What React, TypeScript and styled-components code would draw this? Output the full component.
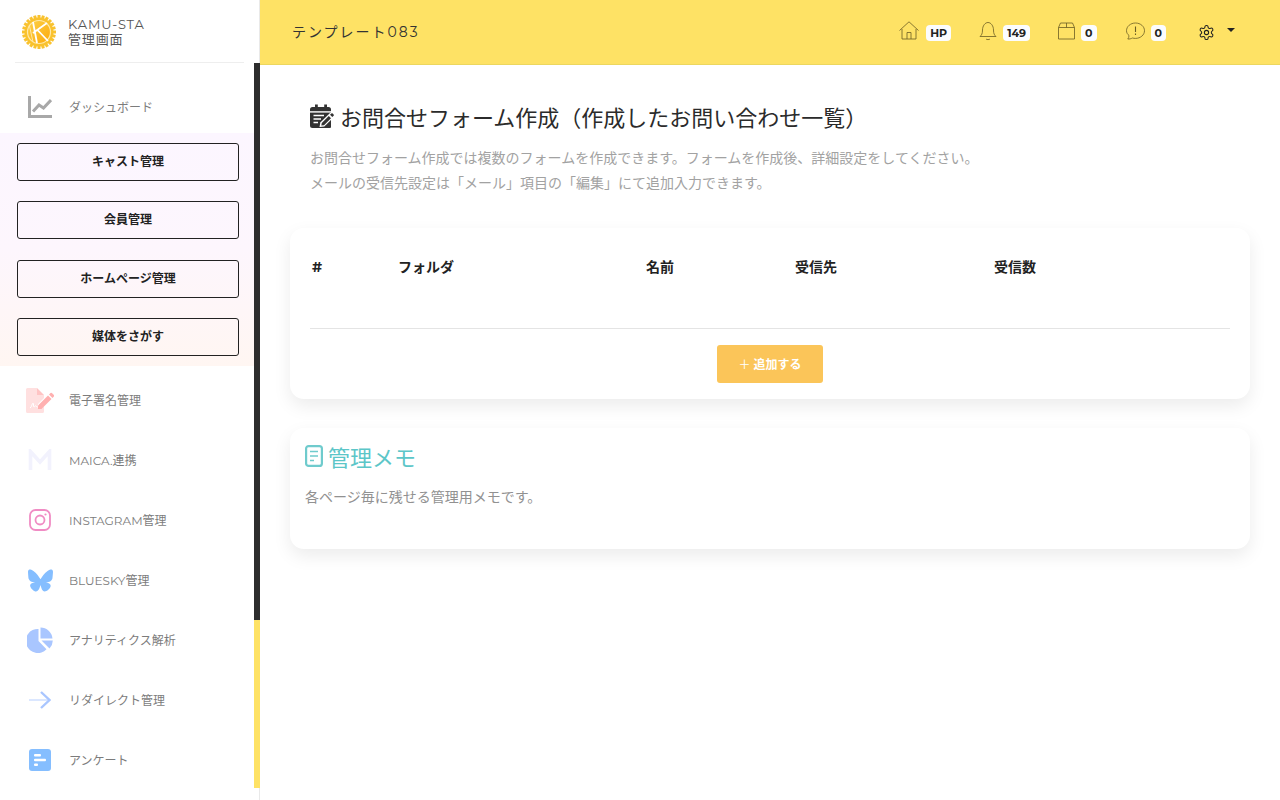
import React from 'react';
import styled, { createGlobalStyle } from 'styled-components';
import { FaBluesky } from 'react-icons/fa6';

const FONT = `Montserrat, Inter, "Noto Sans CJK JP", sans-serif`;

const GlobalStyle = createGlobalStyle`
  html, body {
    margin: 0;
    height: 100%;
    overflow: hidden;
    background: #fff;
  }
  * { box-sizing: border-box; }
  body { font-family: ${FONT}; color: #222; }
`;

const Page = styled.div`
  display: flex;
  width: 1280px;
  height: 800px;
  overflow: hidden;
`;

const Sidebar = styled.aside`
  position: relative;
  flex: 0 0 260px;
  height: 800px;
  border-right: 1px solid #e9e9e9;
`;

const Brand = styled.div`
  display: flex;
  align-items: center;
  gap: 12px;
  height: 63px;
  margin: 0 15px;
  width: 229px;
  padding: 1px 0 0 7px;
  border-bottom: 1px solid #eeeeee;
`;

const BrandText = styled.div`
  font-size: 13px;
  line-height: 15px;
  color: #555;
  letter-spacing: 0.85px;
`;

const NavItem = styled.div`
  display: flex;
  align-items: center;
  height: 60px;
  padding-left: 25px;
  font-size: 12px;
  color: #7c7c7c;
`;

const NavLabel = styled.span`
  padding-bottom: 2px;
`;

const NavIconBox = styled.span`
  display: flex;
  align-items: center;
  justify-content: center;
  flex: 0 0 30px;
  height: 30px;
  margin-right: 14px;
`;

const DashboardItem = styled(NavItem)`
  height: 70px;
  padding-top: 18px;
`;

const ManageBand = styled.div`
  display: flex;
  flex-direction: column;
  gap: 20.25px;
  width: 254px;
  height: 233px;
  padding: 10px 15px 0 17px;
  background: linear-gradient(180deg, #fcf6ff 0%, #fdf6fd 50%, #fff6f2 100%);
`;

const ManageButton = styled.div`
  display: flex;
  align-items: center;
  justify-content: center;
  width: 222px;
  height: 38px;
  padding-bottom: 3px;
  border: 1px solid #222;
  border-radius: 3px;
  font-size: 12px;
  font-weight: 700;
  color: #222;
`;

const NavList = styled.div`
  display: flex;
  flex-direction: column;
  padding-top: 4px;
`;

const ScrollTrack = styled.div`
  position: absolute;
  top: 63px;
  right: -1px;
  width: 6px;
  height: 725px;
  background: #2d2d2d;
`;

const ScrollThumb = styled.div`
  position: absolute;
  left: 0;
  bottom: 0;
  width: 100%;
  height: 168px;
  background: #fee265;
`;

const Main = styled.div`
  flex: 1;
  display: flex;
  flex-direction: column;
  min-width: 0;
`;

const TopBar = styled.header`
  display: flex;
  align-items: center;
  justify-content: space-between;
  height: 65px;
  padding: 0 45px 0 32px;
  background: #fee265;
  border-bottom: 1px solid #ecd75f;
`;

const TopTitle = styled.div`
  font-size: 14px;
  letter-spacing: 2px;
  color: #333;
  padding-bottom: 2px;
`;

const TopActions = styled.div`
  display: flex;
  align-items: center;
`;

const TopAction = styled.div<{ $gap: number; $iconGap?: number }>`
  display: flex;
  align-items: center;
  gap: ${props => props.$iconGap || 6}px;
  margin-right: ${props => props.$gap}px;
  color: #6b5d23;

  svg {
    margin-top: -3px;
  }
`;

const CountBadge = styled.span`
  display: inline-flex;
  align-items: center;
  justify-content: center;
  min-width: 15px;
  height: 16px;
  margin-top: 1px;
  padding: 0 4px;
  background: #fbfcff;
  border-radius: 4px;
  font-size: 11px;
  font-weight: 700;
  color: #222;
`;

const Caret = styled.span`
  width: 0;
  height: 0;
  margin: -4px 0 0 12px;
  border-left: 4px solid transparent;
  border-right: 4px solid transparent;
  border-top: 4px solid #222;
`;

const Content = styled.main`
  display: flex;
  flex-direction: column;
  padding: 0 30px;
`;

const Intro = styled.section`
  padding: 36px 20px 0;
  height: 163px;
`;

const PageTitle = styled.h1`
  display: flex;
  align-items: center;
  gap: 4px;
  margin: 0 0 15px;
  height: 30px;
  font-size: 22px;
  font-weight: 400;
  color: #2b2b2b;
`;

const Description = styled.p`
  margin: 0;
  font-size: 14px;
  line-height: 25px;
  color: #a2a2a2;
`;

const Card = styled.section`
  width: 960px;
  background: #fff;
  border-radius: 14px;
  box-shadow: 0 7px 18px rgba(0, 0, 0, 0.08);
`;

const TableCard = styled(Card)`
  height: 171px;
  padding: 0 20px;
  margin-bottom: 29px;
`;

const TableHead = styled.div`
  display: grid;
  grid-template-columns: 86px 248px 149px 199px 1fr;
  height: 101px;
  padding: 27px 2px 0;
  border-bottom: 1px solid #e4e4e4;
  font-size: 14px;
  font-weight: 700;
  line-height: 24px;
  color: #222;
`;

const TableFoot = styled.div`
  display: flex;
  justify-content: center;
  padding-top: 16px;
`;

const AddButton = styled.div`
  display: flex;
  align-items: center;
  justify-content: center;
  gap: 3px;
  width: 106px;
  height: 38px;
  padding-bottom: 2px;
  background: #fbc559;
  border-radius: 3px;
  font-size: 12px;
  font-weight: 700;
  color: #fff;
`;

const AddPlus = styled.span`
  font-weight: 400;
`;

const MemoCard = styled(Card)`
  height: 121px;
  padding: 12px 15px 0;
`;

const MemoTitle = styled.h2`
  display: flex;
  align-items: center;
  gap: 5px;
  margin: 0 0 13px;
  height: 32px;
  font-size: 22px;
  font-weight: 400;
  color: #5cc6c8;
`;

const MemoText = styled.p`
  margin: 0;
  font-size: 14px;
  line-height: 24px;
  color: #919191;
`;

const sunTeeth = Array.from({ length: 24 }, (_, i) => i * 15);

const LogoMark = () => (
  <svg width="34" height="34" viewBox="0 0 34 34">
    <defs>
      <linearGradient id="sun" x1="0" y1="0" x2="1" y2="1">
        <stop offset="0" stopColor="#fcd24a" />
        <stop offset="1" stopColor="#fda90a" />
      </linearGradient>
    </defs>
    {sunTeeth.map(deg => (
      <rect key={deg} x="15.500" y="0" width="3" height="4" fill="#f9c22e" transform={`rotate(${deg} 17 17)`} />
    ))}
    <circle cx="17" cy="17" r="14.500" fill="#f9c22e" />
    <circle cx="17" cy="17" r="11.500" fill="url(#sun)" stroke="#ffe9a8" strokeWidth="1.200" />
    <path d="M11 7 15 28M11 18 25 8M15.500 15 26 26" stroke="#fff" strokeWidth="1.800" fill="none" />
    <path d="M7.500 11 11 27" stroke="#ffe9a8" strokeWidth="1" fill="none" />
  </svg>
);

const ChartIcon = () => (
  <svg width="24" height="22" viewBox="0 0 24 22" fill="none" stroke="#a8a8a8" strokeWidth="3">
    <path d="M1.500 0V20.500H24" />
    <path d="M5 15.500 11 9l4.500 3L23 4" />
  </svg>
);

const CalendarEditIcon = () => (
  <svg width="26" height="24" viewBox="0 0 26 24">
    <path d="M2.500 3H5V0.500h2.800V3h6.400V0.500H17V3h1.500A2.500 2.500 0 0 1 21 5.500V23a1 1 0 0 1-1 1H2.500A2.500 2.500 0 0 1 0 21.500V5.500A2.500 2.500 0 0 1 2.500 3Z" fill="#333" />
    <rect x="0" y="7.200" width="21" height="1.400" fill="#fff" />
    <path d="M3.500 11.500h10.500M3.500 15h7.500M3.500 18.500h4.500" stroke="#fff" strokeWidth="1.600" />
    <path d="M9.500 23l.8-4.500L20.500 8.500l4 4L14.300 22.500Z" fill="#fff" />
    <path d="M11.300 21.500l.5-2.500 7-7 2.200 2.200-7 7ZM20 10.800l1.300-1.300a1 1 0 0 1 1.400 0l.9.900a1 1 0 0 1 0 1.400L22.300 13Z" fill="#333" />
  </svg>
);

const SignIcon = () => (
  <svg width="28" height="25" viewBox="0 0 28 25">
    <path d="M1.500 0H11v7h7v3l-6 6v4h4l2-2v5.500a1.500 1.500 0 0 1-1.500 1.500h-15A1.500 1.500 0 0 1 0 23.500V1.500A1.500 1.500 0 0 1 1.500 0Z" fill="#ffe0e0" />
    <path d="M11 0l7 7h-7Z" fill="#ffc4c4" />
    <path d="M12 17.500 22 7.500l3.500 3.500-10 10H12Z" fill="#ffb0b0" />
    <path d="M23 6.500l1.500-1.500a1 1 0 0 1 1.400 0l2 2a1 1 0 0 1 0 1.400L26.500 10Z" fill="#ffb0b0" />
    <path d="M4 20c2-1 2-5 3-5s0 4 1 4 1-2 2-1 1 1 2 1" stroke="#fff" strokeWidth="1" fill="none" />
  </svg>
);

const MaicaIcon = () => (
  <svg width="24" height="22" viewBox="0 0 24 22">
    <path d="M2.500 21V2.500L12 13 21.500 2.500V21" stroke="#f2f2fd" strokeWidth="3.600" fill="none" />
  </svg>
);

const InstagramIcon = () => (
  <svg width="22" height="22" viewBox="0 0 22 22" fill="none">
    <rect x="1" y="1" width="20" height="20" rx="5.500" stroke="#f08cc4" strokeWidth="1.800" />
    <circle cx="11" cy="11" r="4.500" stroke="#f08cc4" strokeWidth="1.800" />
    <circle cx="16.500" cy="5.500" r="1.100" fill="#f08cc4" />
  </svg>
);

const PieIcon = () => (
  <svg width="26" height="26" viewBox="0 0 26 26">
    <path d="M11.500 2V14l8 8.200A12 12 0 1 1 11.500 2Z" fill="#a9c6ff" />
    <path d="M13.500 0.500A12 12 0 0 1 25.500 11.500H13.500Z" fill="#a9c6ff" />
    <path d="M14.500 13.500H25.800A12 12 0 0 1 22.500 21.500Z" fill="#a9c6ff" />
  </svg>
);

const ArrowIcon = () => (
  <svg width="22" height="18" viewBox="0 0 22 18" fill="none">
    <path d="M0 9H20" stroke="#dbe7ff" strokeWidth="2" />
    <path d="M12 1l8.500 8-8.500 8" stroke="#a9c6ff" strokeWidth="2.400" />
  </svg>
);

const SurveyIcon = () => (
  <svg width="22" height="22" viewBox="0 0 22 22">
    <rect width="22" height="22" rx="3" fill="#85beff" />
    <rect x="5" y="5" width="7" height="2.600" rx="1" fill="#fff" />
    <rect x="5" y="9.700" width="12" height="2.600" rx="1" fill="#fff" />
    <rect x="5" y="14.400" width="4" height="2.600" rx="1" fill="#fff" />
  </svg>
);

const HomeIcon = () => (
  <svg width="20" height="19" viewBox="0 0 20 19" fill="none" stroke="#6b5d23" strokeWidth="0.800">
    <path d="M0.500 9.500 10 0.800l9.500 8.700M3 8v10h14V8M8 18v-6.500h4V18" />
  </svg>
);

const BellIcon = () => (
  <svg width="18" height="20" viewBox="0 0 18 20" fill="none" stroke="#6b5d23" strokeWidth="0.800">
    <path d="M1 15.500c1.500-1.500 2.500-2.500 2.500-6.500 0-4 2.500-7.500 5.500-7.500s5.500 3.500 5.500 7.500c0 4 1 5 2.500 6.500Z" />
    <path d="M7 18c.5.800 3.500.8 4 0" />
  </svg>
);

const BoxIcon = () => (
  <svg width="17" height="18" viewBox="0 0 17 18" fill="none" stroke="#6b5d23" strokeWidth="0.800">
    <path d="M0.500 5.500h16V17h-16ZM0.500 5.500 2.500 1h12l2 4.500M8.500 1v4.500" />
  </svg>
);

const AlertIcon = () => (
  <svg width="19" height="18" viewBox="0 0 19 18" fill="none" stroke="#6b5d23" strokeWidth="0.800">
    <path d="M3 13.500C1.500 12.300.5 10.700.5 8.700.5 4.500 4.500 1 9.500 1s9 3.500 9 7.700-4 7.700-9 7.700c-1 0-2-.1-3-.4C5 16.700 3.500 17.200 1.800 17c.7-.8 1.200-2 1.200-3.500Z" />
    <path d="M9.500 4.500V10M9.500 11.500v1.500" strokeWidth="1.100" />
  </svg>
);

const GearIcon = () => (
  <svg width="17" height="17" viewBox="0 0 24 24" fill="none" stroke="#222" strokeWidth="1.500" strokeLinecap="round" strokeLinejoin="round">
    <path d="M12.220 2h-.44a2 2 0 0 0-2 2v.18a2 2 0 0 1-1 1.730l-.43.250a2 2 0 0 1-2 0l-.150-.080a2 2 0 0 0-2.730.730l-.220.380a2 2 0 0 0 .730 2.730l.150.100a2 2 0 0 1 1 1.720v.510a2 2 0 0 1-1 1.740l-.150.090a2 2 0 0 0-.730 2.730l.220.380a2 2 0 0 0 2.730.730l.150-.080a2 2 0 0 1 2 0l.430.250a2 2 0 0 1 1 1.730V20a2 2 0 0 0 2 2h.440a2 2 0 0 0 2-2v-.180a2 2 0 0 1 1-1.730l.430-.250a2 2 0 0 1 2 0l.150.080a2 2 0 0 0 2.730-.730l.220-.390a2 2 0 0 0-.730-2.730l-.150-.080a2 2 0 0 1-1-1.740v-.500a2 2 0 0 1 1-1.740l.150-.090a2 2 0 0 0 .730-2.730l-.220-.380a2 2 0 0 0-2.730-.730l-.150.080a2 2 0 0 1-2 0l-.430-.250a2 2 0 0 1-1-1.730V4a2 2 0 0 0-2-2z" />
    <circle cx="12" cy="12" r="3" />
  </svg>
);

const MemoIcon = () => (
  <svg width="18" height="22" viewBox="0 0 18 22" fill="none" stroke="#6fcbcd" strokeWidth="2.200">
    <rect x="1.100" y="1.100" width="15.800" height="19.800" rx="2.500" />
    <path d="M5 6.500h8M5 11h8M5 15.500h4" strokeWidth="1.600" />
  </svg>
);

const navItems: { label: string; icon: React.ReactNode }[] = [
  { label: '電子署名管理', icon: <SignIcon /> },
  { label: 'MAICA.連携', icon: <MaicaIcon /> },
  { label: 'INSTAGRAM管理', icon: <InstagramIcon /> },
  { label: 'BLUESKY管理', icon: <FaBluesky size={25} color="#85beff" /> },
  { label: 'アナリティクス解析', icon: <PieIcon /> },
  { label: 'リダイレクト管理', icon: <ArrowIcon /> },
  { label: 'アンケート', icon: <SurveyIcon /> },
];

const manageItems = ['キャスト管理', '会員管理', 'ホームページ管理', '媒体をさがす'];
const columns = ['#', 'フォルダ', '名前', '受信先', '受信数'];

export default function App() {
  return (
    <Page>
      <GlobalStyle />
      <Sidebar>
        <Brand>
          <LogoMark />
          <BrandText>
            KAMU-STA
            <br />
            管理画面
          </BrandText>
        </Brand>
        <DashboardItem>
          <NavIconBox>
            <ChartIcon />
          </NavIconBox>
          <NavLabel>ダッシュボード</NavLabel>
        </DashboardItem>
        <ManageBand>
          {manageItems.map(item => (
            <ManageButton key={item}>{item}</ManageButton>
          ))}
        </ManageBand>
        <NavList>
          {navItems.map(item => (
            <NavItem key={item.label}>
              <NavIconBox>{item.icon}</NavIconBox>
              <NavLabel>{item.label}</NavLabel>
            </NavItem>
          ))}
        </NavList>
        <ScrollTrack>
          <ScrollThumb />
        </ScrollTrack>
      </Sidebar>
      <Main>
        <TopBar>
          <TopTitle>テンプレート083</TopTitle>
          <TopActions>
            <TopAction $gap={28} $iconGap={7}>
              <HomeIcon />
              <CountBadge>HP</CountBadge>
            </TopAction>
            <TopAction $gap={28}>
              <BellIcon />
              <CountBadge>149</CountBadge>
            </TopAction>
            <TopAction $gap={29}>
              <BoxIcon />
              <CountBadge>0</CountBadge>
            </TopAction>
            <TopAction $gap={32}>
              <AlertIcon />
              <CountBadge>0</CountBadge>
            </TopAction>
            <GearIcon />
            <Caret />
          </TopActions>
        </TopBar>
        <Content>
          <Intro>
            <PageTitle>
              <CalendarEditIcon />
              お問合せフォーム作成（作成したお問い合わせ一覧）
            </PageTitle>
            <Description>
              お問合せフォーム作成では複数のフォームを作成できます。フォームを作成後、詳細設定をしてください。
              <br />
              メールの受信先設定は「メール」項目の「編集」にて追加入力できます。
            </Description>
          </Intro>
          <TableCard>
            <TableHead>
              {columns.map(col => (
                <span key={col}>{col}</span>
              ))}
            </TableHead>
            <TableFoot>
              <AddButton>
                <AddPlus>＋</AddPlus>追加する
              </AddButton>
            </TableFoot>
          </TableCard>
          <MemoCard>
            <MemoTitle>
              <MemoIcon />
              管理メモ
            </MemoTitle>
            <MemoText>各ページ毎に残せる管理用メモです。</MemoText>
          </MemoCard>
        </Content>
      </Main>
    </Page>
  );
}
